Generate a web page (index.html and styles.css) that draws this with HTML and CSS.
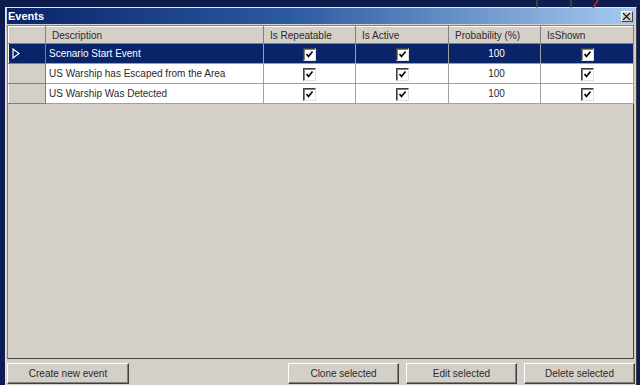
FILE: index.html
```html
<!DOCTYPE html>
<html lang="en">
<head>
  <meta charset="UTF-8" />
  <title>Events</title>
  <link rel="stylesheet" href="styles.css">
</head>
<body>
  <div class="desktop">
    <svg class="desk-lines" width="640" height="8" viewBox="0 0 640 8">
      <line x1="537" y1="0" x2="537" y2="8" stroke="#2f7a3a" stroke-width="1"/>
      <line x1="571" y1="0" x2="571" y2="8" stroke="#2f7a3a" stroke-width="1"/>
      <line x1="593" y1="8" x2="598" y2="0" stroke="#d02020" stroke-width="1.5"/>
    </svg>
  </div>

  <div class="window">
    <div class="titlebar">
      <span class="title">Events</span>
      <span class="close">
        <svg width="8" height="7" viewBox="0 0 8 7">
          <path d="M0 0 L7 7 M7 0 L0 7" stroke="#000" stroke-width="1.1"/>
        </svg>
      </span>
    </div>

    <div class="grid">
      <table>
        <colgroup>
          <col class="c-head"><col class="c-desc"><col class="c-rep">
          <col class="c-act"><col class="c-prob"><col class="c-show">
        </colgroup>
        <thead>
          <tr>
            <th class="rowhead"></th>
            <th>Description</th>
            <th>Is Repeatable</th>
            <th>Is Active</th>
            <th>Probability (%)</th>
            <th>IsShown</th>
          </tr>
        </thead>
        <tbody>
          <tr class="selected">
            <td class="rowhead">
              <svg width="8" height="11" viewBox="0 0 8 11">
                <path d="M1 1 L7 5.5 L1 10 Z" fill="none" stroke="#fff" stroke-width="1.2"/>
              </svg>
            </td>
            <td class="text">Scenario Start Event</td>
            <td class="chk"><span class="box"></span></td>
            <td class="chk"><span class="box"></span></td>
            <td class="num">100</td>
            <td class="chk"><span class="box"></span></td>
          </tr>
          <tr>
            <td class="rowhead"></td>
            <td class="text">US Warship has Escaped from the Area</td>
            <td class="chk"><span class="box"></span></td>
            <td class="chk"><span class="box"></span></td>
            <td class="num">100</td>
            <td class="chk"><span class="box"></span></td>
          </tr>
          <tr>
            <td class="rowhead"></td>
            <td class="text">US Warship Was Detected</td>
            <td class="chk"><span class="box"></span></td>
            <td class="chk"><span class="box"></span></td>
            <td class="num">100</td>
            <td class="chk"><span class="box"></span></td>
          </tr>
        </tbody>
      </table>
    </div>

    <div class="buttons">
      <button class="btn btn-create">Create new event</button>
      <span class="spacer"></span>
      <button class="btn">Clone selected</button>
      <button class="btn">Edit selected</button>
      <button class="btn">Delete selected</button>
    </div>
  </div>
</body>
</html>
```

FILE: styles.css
```css
/* ── BASE ──────────────────────────────────────────────── */
* { margin: 0; padding: 0; box-sizing: border-box; }
body {
  width: 640px;
  height: 385px;
  overflow: hidden;
  background: #0c1c52;
  font-family: "Liberation Sans", Arial, sans-serif;
  font-size: 10px;
  color: #2a2a2a;
}

/* ── DESKTOP STRIP ─────────────────────────────────────── */
.desktop {
  height: 7px;
  background: #0e1d4e;
}
.desk-lines { display: block; }

/* ── WINDOW ────────────────────────────────────────────── */
.window {
  margin-left: 5px;
  width: 632px;
  height: 378px;
  background: #d4d0c8;
  border-left: 1px solid #e8e6e0;
  border-top: 1px solid #e8e6e0;
  border-right: 1px solid #404040;
  padding: 0 1px;
}
.titlebar {
  height: 16px;
  display: flex;
  align-items: center;
  justify-content: space-between;
  padding: 0 2px 0 1px;
  background: linear-gradient(90deg, #0a246a 0%, #2c5aa0 45%, #a6caf0 100%);
}
.title {
  color: #fff;
  font-weight: bold;
  font-size: 11px;
}
.close {
  width: 12px;
  height: 11px;
  display: flex;
  align-items: center;
  justify-content: center;
  background: #d4d0c8;
  border: 1px solid;
  border-color: #fff #404040 #404040 #fff;
}

/* ── GRID ──────────────────────────────────────────────── */
.grid {
  margin-top: 1px;
  width: 627px;
  height: 334px;
  border: 1px solid;
  border-color: #808080 #404040 #404040 #808080;
  background: #d4d0c8;
}
table {
  border-collapse: collapse;
  table-layout: fixed;
  width: 625px;
}
.c-head { width: 37px; }
.c-desc { width: 218px; }
.c-rep  { width: 92px; }
.c-act  { width: 93px; }
.c-prob { width: 92px; }
.c-show { width: 93px; }

th {
  height: 17px;
  font-weight: normal;
  text-align: left;
  padding: 0 0 0 6px;
  background: #d4d0c8;
  border-top: 1px solid #fff;
  border-left: 1px solid #fff;
  border-right: 1px solid #808080;
  border-bottom: 1px solid #808080;
  white-space: nowrap;
}
td {
  height: 20px;
  background: #fff;
  border: 1px solid #a0a0a0;
  white-space: nowrap;
  overflow: hidden;
}
td.rowhead, th.rowhead {
  background: #d4d0c8;
  border-top: 1px solid #fff;
  border-left: 1px solid #fff;
  border-right: 1px solid #808080;
  border-bottom: 1px solid #808080;
  padding: 0 0 0 3px;
}
td.text { padding: 0 0 0 3px; }
td.num { text-align: center; padding-left: 4px; }
td.chk { text-align: center; padding-top: 2px; }

.selected td { background: #0a246a; color: #fff; }
.selected td.rowhead { background: #0a246a; border-color: #0a246a #808080 #808080 #fff; }
.rowhead svg { display: block; }

/* ── CHECKBOX ──────────────────────────────────────────── */
.box {
  display: inline-block;
  width: 13px;
  height: 13px;
  background: #fff url("data:image/svg+xml;utf8,<svg xmlns='http://www.w3.org/2000/svg' width='9' height='9'><path d='M1.5 4 L3.5 6.5 L7.5 1.5' fill='none' stroke='black' stroke-width='1.6'/></svg>") center / 9px 9px no-repeat;
  border: 1px solid;
  border-color: #404040 #e0e0e0 #e0e0e0 #404040;
  box-shadow: inset 1px 1px 0 #808080;
  vertical-align: middle;
}

/* ── BUTTONS ───────────────────────────────────────────── */
.buttons {
  display: flex;
  gap: 7px;
  margin-top: 4px;
}
.spacer { flex: 1; }
.btn {
  width: 111px;
  height: 21px;
  font-family: "Liberation Sans", Arial, sans-serif;
  font-size: 10px;
  color: #2a2a2a;
  background: #d4d0c8;
  border: 1px solid;
  border-color: #fff #404040 #404040 #fff;
  box-shadow: inset -1px -1px 0 #808080;
}
.btn-create { width: 122px; }
```
